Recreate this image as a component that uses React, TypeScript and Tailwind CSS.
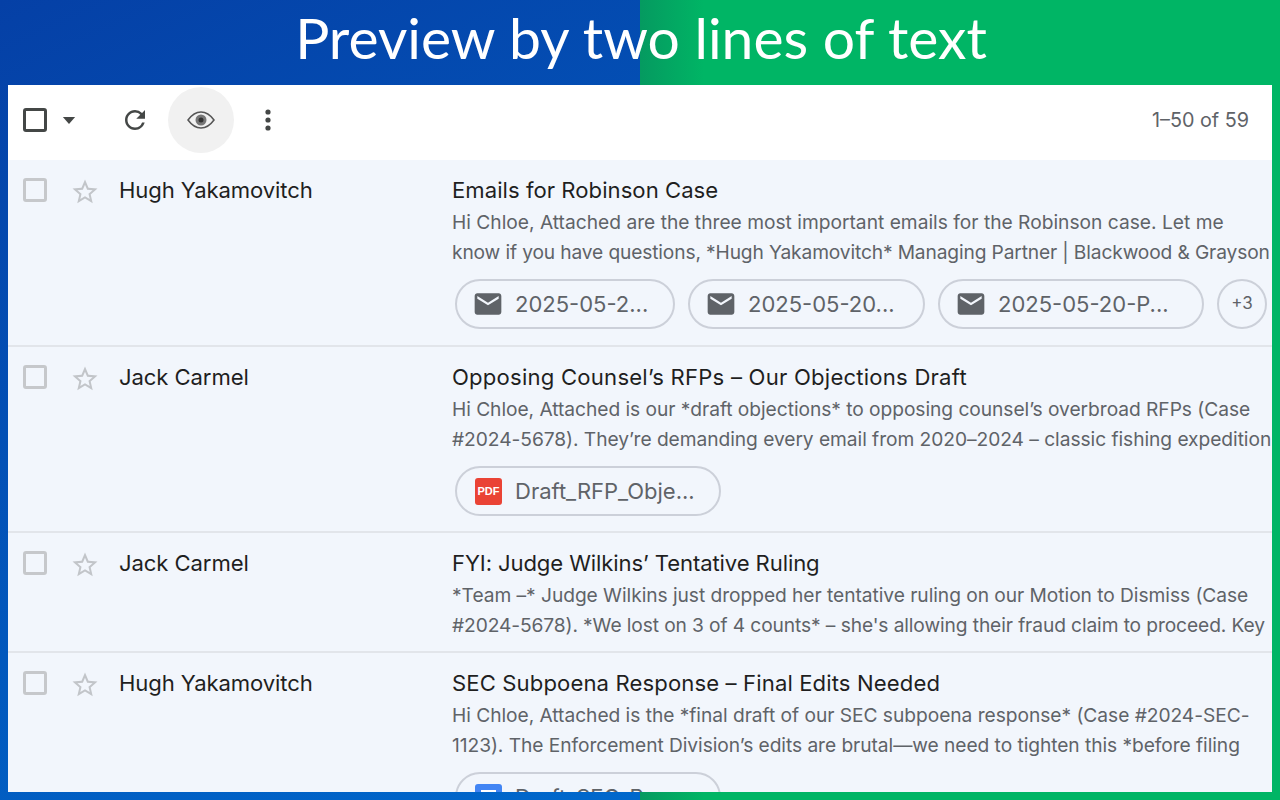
import React from "react";

const GS = "font-['Inter','Noto_Sans',sans-serif]";

function Star() {
  return (
    <svg width="30" height="30" viewBox="0 0 24 24" className="text-[#c2c5c9]" fill="currentColor">
      <path d="M22 9.240l-7.190-.62L12 2 9.190 8.630 2 9.240l5.460 4.730L5.820 21 12 17.270 18.180 21l-1.630-7.030L22 9.240zM12 15.400l-3.760 2.270 1-4.280-3.320-2.880 4.380-.38L12 6.100l1.710 4.040 4.380.38-3.320 2.880 1 4.280L12 15.400z" />
    </svg>
  );
}

function Check() {
  return <div className="w-6 h-6 rounded-[3px] border-[3px] border-[#c6c8cb]" />;
}

function Mail() {
  return (
    <svg width="32" height="32" viewBox="0 0 24 24" className="shrink-0 text-[#5f6368]" fill="currentColor">
      <path d="M20 4H4c-1.100 0-2 .9-2 2v12c0 1.100.9 2 2 2h16c1.100 0 2-.9 2-2V6c0-1.100-.9-2-2-2zm0 4l-8 5-8-5V6l8 5 8-5v2z" />
    </svg>
  );
}

function Pdf() {
  return (
    <div className="w-[27px] h-[27px] ml-[3px] mr-[2px] shrink-0 rounded-[3px] bg-[#ea4335] flex items-center justify-center text-white text-[11px] font-bold font-['Liberation_Sans',sans-serif]">
      PDF
    </div>
  );
}

function Doc() {
  return (
    <div className="w-[27px] h-[27px] ml-[3px] mr-[2px] shrink-0 rounded-[3px] bg-[#4285f4] flex flex-col gap-[2px] pt-[6px] px-[6px]">
      <div className="h-[3px] bg-white" />
      <div className="h-[3px] bg-white" />
      <div className="h-[3px] bg-white" />
    </div>
  );
}

function Chip({ w, icon, label }: { w: string; icon: React.ReactNode; label: string }) {
  return (
    <div className={`${w} h-[50px] shrink-0 rounded-full border-2 border-[#ccd0d9] flex items-center pl-[15px] gap-[11px]`}>
      {icon}
      <span className="text-[22px] text-[#5f6368] whitespace-nowrap">{label}</span>
    </div>
  );
}

function Row({
  sender, subject, l1, l2, h, border = true, children, ts = "", t1 = "", t2 = "", ss = "",
}: {
  sender: string; subject: string; l1: string; l2: string; h: string; border?: boolean; children?: React.ReactNode;
  ts?: string; t1?: string; t2?: string; ss?: string;
}) {
  return (
    <div className={`${h} shrink-0 flex overflow-hidden ${border ? "border-b-2 border-[#e2e5ea]" : ""}`}>
      <div className="w-[111px] shrink-0 pl-[15px] pt-[18px] flex items-start">
        <Check />
        <div className="ml-[23px] -mt-[1px]"><Star /></div>
      </div>
      <div className={`w-[333px] shrink-0 pt-[14px] text-[22.100px] leading-[32px] text-[#1f1f1f] ${ss}`}>{sender}</div>
      <div className="flex-1 min-w-0 pt-[14px]">
        <div className={`text-[22.100px] leading-[32px] text-[#1f1f1f] whitespace-nowrap ${ts}`}>{subject}</div>
        <div className={`mt-[1px] text-[19.200px] leading-[30px] text-[#5f6368] whitespace-nowrap ${t1}`}>{l1}</div>
        <div className={`text-[19.200px] leading-[30px] text-[#5f6368] whitespace-nowrap ${t2}`}>{l2}</div>
        {children && <div className="flex gap-[13px] pl-[3px] mt-[12px]">{children}</div>}
      </div>
    </div>
  );
}

export default function App() {
  return (
    <div className={`relative w-[1280px] h-[800px] overflow-hidden flex flex-col ${GS} [background:linear-gradient(155deg,#0540a6_0%,#0068cc_100%)_left/50%_100%_no-repeat,linear-gradient(to_right,#059a60_50%,#00b565_55%)]`}>
      <div className="h-[85px] shrink-0 flex items-center justify-center text-white text-[57px] leading-none font-['Lato',sans-serif] pb-[10px] pl-[2px]">
        Preview by two lines of text
      </div>
      <div className="mx-2 flex-1 min-h-0 flex flex-col overflow-hidden mb-2 bg-[#f2f6fc]">
        <div className="h-[75px] shrink-0 bg-white flex items-center pb-[5px]">
          <div className="ml-[15px] w-6 h-6 rounded-[3px] border-[3px] border-[#444746]" />
          <svg width="14" height="7" viewBox="0 0 14 8" className="ml-[15px] text-[#444746]" fill="currentColor"><path d="M0 0h14L7 8z" /></svg>
          <svg width="30" height="30" viewBox="0 0 24 24" className="ml-[44px] text-[#444746]" fill="currentColor">
            <path d="M17.650 6.350A7.958 7.958 0 0 0 12 4c-4.420 0-7.990 3.580-7.990 8s3.570 8 7.990 8c3.730 0 6.840-2.550 7.730-6h-2.080A5.990 5.990 0 0 1 12 18c-3.310 0-6-2.690-6-6s2.690-6 6-6c1.660 0 3.140.69 4.220 1.780L13 11h7V4l-2.350 2.350z" />
          </svg>
          <div className="ml-[18px] w-[66px] h-[66px] rounded-full bg-[#f1f1f1] flex items-center justify-center">
            <svg width="28" height="18" viewBox="0 0 28 18">
              <path d="M1 9C5 3.500 9.500 1 14 1s9 2.500 13 8c-4 5.500-8.500 8-13 8S5 14.500 1 9z" fill="none" stroke="#555" strokeWidth="1.500" />
              <circle cx="14" cy="9" r="5.500" fill="#777" />
              <circle cx="14" cy="9" r="2.500" fill="#333" />
            </svg>
          </div>
          <svg width="6" height="22" viewBox="0 0 6 22" className="ml-[31px] text-[#444746]" fill="currentColor">
            <circle cx="3" cy="3" r="2.600" /><circle cx="3" cy="11" r="2.600" /><circle cx="3" cy="19" r="2.600" />
          </svg>
          <div className="ml-auto mr-[23px] mt-[1px] text-[19.800px] text-[#5f6368]">1–50 of 59</div>
        </div>
        <Row h="h-[187px]" ss="tracking-[-0.1px]" ts="tracking-[0.04px]" t2="tracking-[-0.14px]" sender="Hugh Yakamovitch" subject="Emails for Robinson Case"
          l1="Hi Chloe, Attached are the three most important emails for the Robinson case. Let me"
          l2="know if you have questions, *Hugh Yakamovitch* Managing Partner | Blackwood & Grayson">
          <Chip w="w-[220px]" icon={<Mail />} label="2025-05-2..." />
          <Chip w="w-[237px]" icon={<Mail />} label="2025-05-20..." />
          <Chip w="w-[266px]" icon={<Mail />} label="2025-05-20-P..." />
          <div className="w-[50px] h-[50px] shrink-0 rounded-full border-2 border-[#ccd0d9] flex items-center justify-center text-[17px] text-[#5f6368]">+3</div>
        </Row>
        <Row h="h-[186px]" ss="tracking-[-0.1px]" ts="tracking-[0.22px]" t1="tracking-[-0.05px]" t2="tracking-[-0.05px]" sender="Jack Carmel" subject="Opposing Counsel’s RFPs – Our Objections Draft"
          l1="Hi Chloe, Attached is our *draft objections* to opposing counsel’s overbroad RFPs (Case"
          l2="#2024-5678). They’re demanding every email from 2020–2024 – classic fishing expedition.">
          <Chip w="w-[266px]" icon={<Pdf />} label="Draft_RFP_Obje..." />
        </Row>
        <Row h="h-[120px]" ss="tracking-[-0.1px]" ts="tracking-[-0.11px]" t1="tracking-[-0.05px]" t2="tracking-[-0.11px]" sender="Jack Carmel" subject="FYI: Judge Wilkins’ Tentative Ruling"
          l1="*Team –* Judge Wilkins just dropped her tentative ruling on our Motion to Dismiss (Case"
          l2="#2024-5678). *We lost on 3 of 4 counts* – she's allowing their fraud claim to proceed. Key" />
        <Row h="h-[139px]" border={false} ss="tracking-[-0.1px]" ts="tracking-[0.12px]" t1="tracking-[-0.04px]" t2="tracking-[-0.06px]" sender="Hugh Yakamovitch" subject="SEC Subpoena Response – Final Edits Needed"
          l1="Hi Chloe, Attached is the *final draft of our SEC subpoena response* (Case #2024-SEC-"
          l2="1123). The Enforcement Division’s edits are brutal—we need to tighten this *before filing">
          <Chip w="w-[266px]" icon={<Doc />} label="Draft_SEC_Re..." />
        </Row>
      </div>
    </div>
  );
}
